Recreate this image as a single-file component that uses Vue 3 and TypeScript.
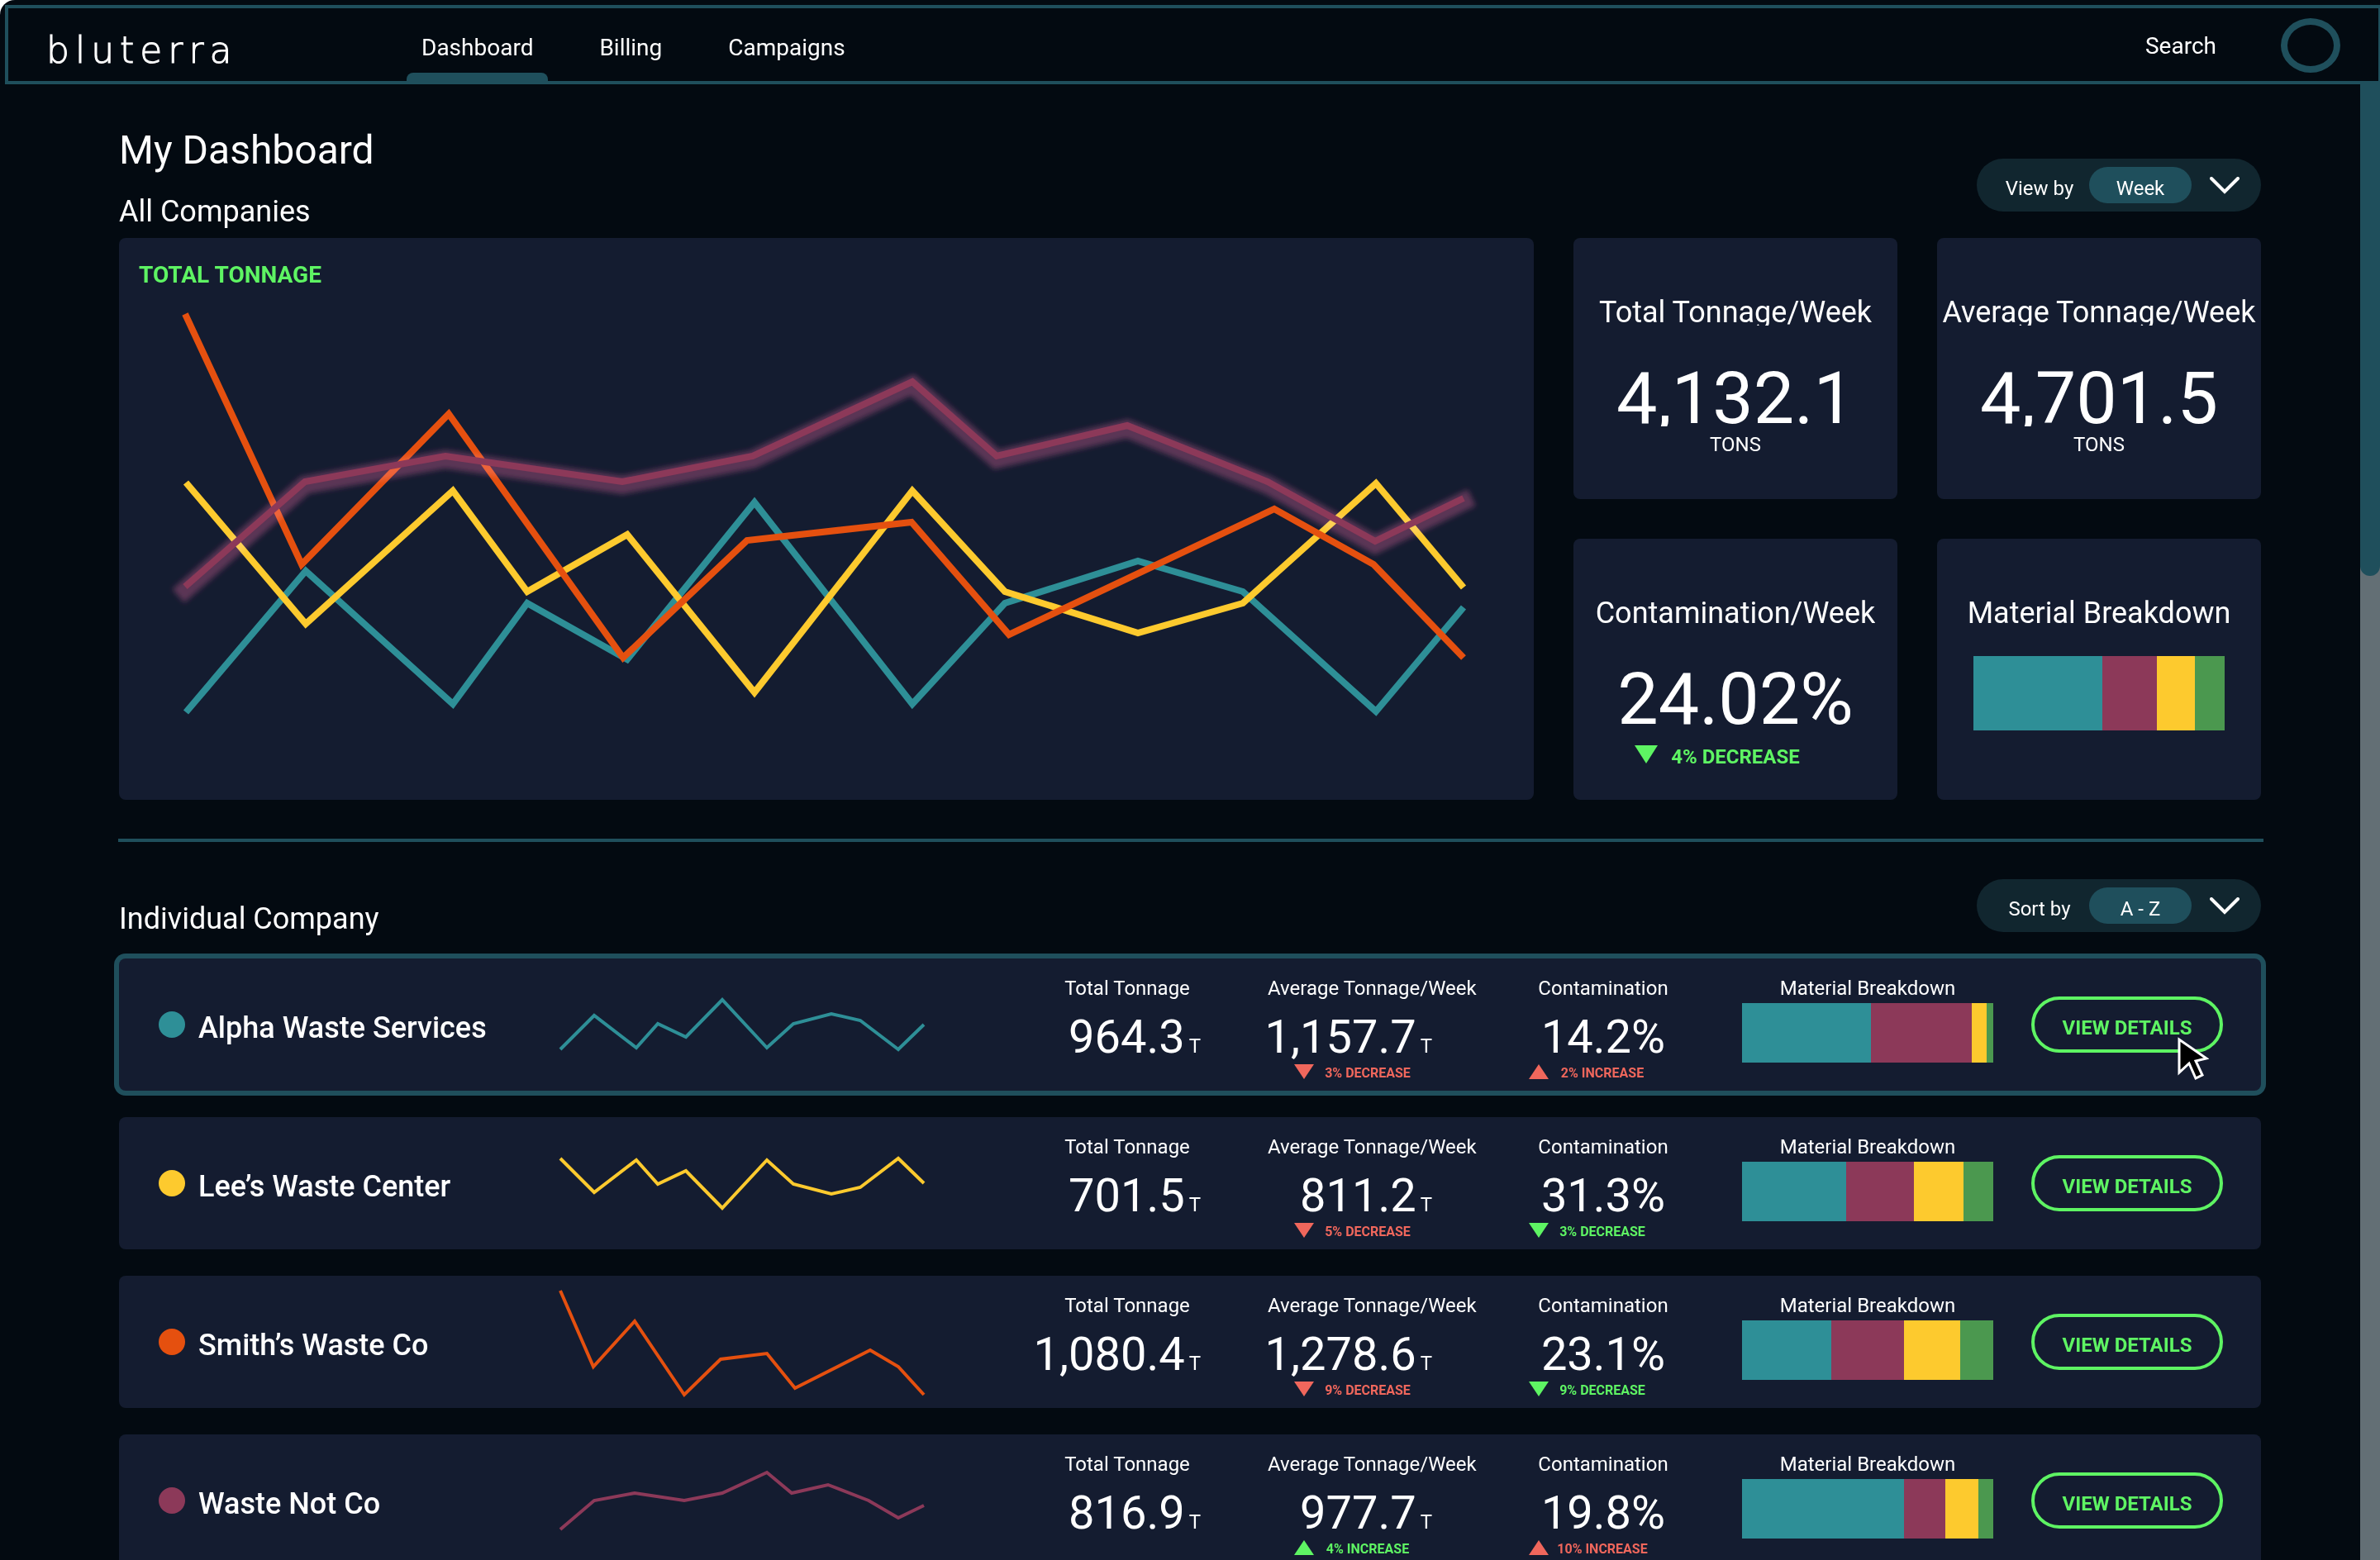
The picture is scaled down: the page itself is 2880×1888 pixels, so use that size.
<script setup lang="ts">
import { ref } from 'vue'

type Tone = 'good' | 'bad'

interface Trend {
  direction: 'up' | 'down'
  text: string
  tone: Tone
}

interface Company {
  name: string
  color: string
  spark: string
  total: string
  average: string
  averageTrend: Trend
  contamination: string
  contaminationTrend: Trend
  materials: number[]
}

const viewBy = ref('Week')
const sortBy = ref('A - Z')
const selected = ref('Alpha Waste Services')

const navItems = ['Dashboard', 'Billing', 'Campaigns']
const activeNav = ref('Dashboard')

const materialColors = ['#2e8f97', '#8c3959', '#fdca2e', '#4b984f']
const overallMaterials = [156, 66, 46, 36]

const chartLines = [
  {
    color: '#2e8f97',
    points: '81,574 226,403 404,564 494,442 615,510 769,320 960,564 1072,442 1233,391 1360,428 1521,573 1627,447',
  },
  {
    color: '#fdca2e',
    points: '81,296 226,467 404,306 494,428 615,359 769,550 960,306 1072,428 1233,478 1360,442 1521,297 1627,423',
  },
  {
    color: '#e5500f',
    points: '80,92 221,395 399,213 610,508 760,366 959,344 1077,480 1398,328 1518,395 1627,508',
  },
]
const highlighted =
  '80,422 225,295 395,264 609,295 767,264 960,174 1062,264 1220,227 1390,295 1520,367 1627,315'

const companies: Company[] = [
  {
    name: 'Alpha Waste Services',
    color: '#2e8f97',
    spark: '0,110 41,69 92,108 118,79 152,95 196,50 250,108 282,79 328,67 363,75 409,110 440,80',
    total: '964.3',
    average: '1,157.7',
    averageTrend: { direction: 'down', text: '3% DECREASE', tone: 'bad' },
    contamination: '14.2%',
    contaminationTrend: { direction: 'up', text: '2% INCREASE', tone: 'bad' },
    materials: [156, 122, 18, 8],
  },
  {
    name: 'Lee’s Waste Center',
    color: '#fdca2e',
    spark: '0,50 41,91 92,52 118,81 152,65 196,110 250,52 282,81 328,93 363,85 409,50 440,80',
    total: '701.5',
    average: '811.2',
    averageTrend: { direction: 'down', text: '5% DECREASE', tone: 'bad' },
    contamination: '31.3%',
    contaminationTrend: { direction: 'down', text: '3% DECREASE', tone: 'good' },
    materials: [126, 82, 60, 36],
  },
  {
    name: 'Smith’s Waste Co',
    color: '#e5500f',
    spark: '0,18 40,110 90,55 150,144 194,101 250,94 284,136 375,90 409,110 440,144',
    total: '1,080.4',
    average: '1,278.6',
    averageTrend: { direction: 'down', text: '9% DECREASE', tone: 'bad' },
    contamination: '23.1%',
    contaminationTrend: { direction: 'down', text: '9% DECREASE', tone: 'good' },
    materials: [108, 88, 68, 40],
  },
  {
    name: 'Waste Not Co',
    color: '#8c3959',
    spark: '0,115 41,80 90,71 150,80 196,71 250,46 280,71 324,61 373,80 409,101 440,86',
    total: '816.9',
    average: '977.7',
    averageTrend: { direction: 'up', text: '4% INCREASE', tone: 'good' },
    contamination: '19.8%',
    contaminationTrend: { direction: 'up', text: '10% INCREASE', tone: 'bad' },
    materials: [196, 50, 40, 18],
  },
]
</script>

<template>
  <div class="app">
    <header class="topbar">
      <a class="logo" href="#">bluterra</a>
      <nav class="nav">
        <a
          v-for="item in navItems"
          :key="item"
          href="#"
          class="nav-link"
          :class="{ active: item === activeNav }"
          @click.prevent="activeNav = item"
          >{{ item }}</a
        >
      </nav>
      <button type="button" class="search">Search</button>
      <button type="button" class="avatar" aria-label="Account"></button>
    </header>

    <div class="body">
      <main class="content">
        <div class="section-head">
          <div class="headings">
            <h1>My Dashboard</h1>
            <h2>All Companies</h2>
          </div>
          <div class="picker">
            <label for="view-by">View by</label>
            <select id="view-by" v-model="viewBy">
              <option>Week</option>
              <option>Month</option>
              <option>Year</option>
            </select>
            <svg class="chevron" viewBox="0 0 36 22" aria-hidden="true">
              <polyline points="2,2 18,18 34,2" />
            </svg>
          </div>
        </div>

        <section class="overview">
          <div class="card chart-card">
            <h3 class="chart-title">TOTAL TONNAGE</h3>
            <svg class="chart" viewBox="0 0 1712 680" role="img" aria-label="Total tonnage by company">
              <defs>
                <filter id="soft" x="-5%" y="-20%" width="110%" height="140%">
                  <feGaussianBlur stdDeviation="3" />
                </filter>
              </defs>
              <polyline
                v-for="line in chartLines"
                :key="line.color"
                :points="line.points"
                :stroke="line.color"
                class="line"
              />
              <g class="glow" transform="translate(0 4)">
                <polyline :points="highlighted" filter="url(#soft)" />
              </g>
              <polyline :points="highlighted" stroke="#8c3959" class="line" />
            </svg>
          </div>

          <div class="kpis">
            <article class="card kpi">
              <h3>Total Tonnage/Week</h3>
              <p class="figure">4,132.1</p>
              <p class="unit">TONS</p>
            </article>
            <article class="card kpi">
              <h3>Average Tonnage/Week</h3>
              <p class="figure">4,701.5</p>
              <p class="unit">TONS</p>
            </article>
            <article class="card kpi">
              <h3>Contamination/Week</h3>
              <p class="figure">24.02%</p>
              <p class="kpi-trend good">
                <svg viewBox="0 0 28 22" aria-hidden="true"><path d="M0 0H28L14 22Z" /></svg>
                <span>4% DECREASE</span>
              </p>
            </article>
            <article class="card kpi">
              <h3>Material Breakdown</h3>
              <div class="materials tall">
                <span
                  v-for="(share, i) in overallMaterials"
                  :key="i"
                  :style="{ flexGrow: share, background: materialColors[i] }"
                ></span>
              </div>
            </article>
          </div>
        </section>

        <hr class="divider" />

        <div class="section-head second">
          <h2>Individual Company</h2>
          <div class="picker">
            <label for="sort-by">Sort by</label>
            <select id="sort-by" v-model="sortBy">
              <option>A - Z</option>
              <option>Z - A</option>
            </select>
            <svg class="chevron" viewBox="0 0 36 22" aria-hidden="true">
              <polyline points="2,2 18,18 34,2" />
            </svg>
          </div>
        </div>

        <section class="companies">
          <article
            v-for="company in companies"
            :key="company.name"
            class="card row"
            :class="{ selected: company.name === selected }"
          >
            <div class="who">
              <span class="dot" :style="{ background: company.color }"></span>
              <h3>{{ company.name }}</h3>
            </div>
            <svg class="spark" viewBox="0 0 440 160" aria-hidden="true">
              <polyline :points="company.spark" :stroke="company.color" />
            </svg>
            <div class="stat total">
              <p class="label">Total Tonnage</p>
              <p class="value">{{ company.total }}<small>T</small></p>
            </div>
            <div class="stat average">
              <p class="label">Average Tonnage/Week</p>
              <p class="value">{{ company.average }}<small>T</small></p>
              <p class="trend" :class="company.averageTrend.tone">
                <svg viewBox="0 0 24 18" aria-hidden="true">
                  <path :d="company.averageTrend.direction === 'up' ? 'M0 18H24L12 0Z' : 'M0 0H24L12 18Z'" />
                </svg>
                <span>{{ company.averageTrend.text }}</span>
              </p>
            </div>
            <div class="stat contamination">
              <p class="label">Contamination</p>
              <p class="value">{{ company.contamination }}</p>
              <p class="trend" :class="company.contaminationTrend.tone">
                <svg viewBox="0 0 24 18" aria-hidden="true">
                  <path
                    :d="company.contaminationTrend.direction === 'up' ? 'M0 18H24L12 0Z' : 'M0 0H24L12 18Z'"
                  />
                </svg>
                <span>{{ company.contaminationTrend.text }}</span>
              </p>
            </div>
            <div class="stat breakdown">
              <p class="label">Material Breakdown</p>
              <div class="materials">
                <span
                  v-for="(share, i) in company.materials"
                  :key="i"
                  :style="{ flexGrow: share, background: materialColors[i] }"
                ></span>
              </div>
            </div>
            <div class="action">
              <button type="button" class="details" @click="selected = company.name">VIEW DETAILS</button>
              <svg v-if="company.name === selected" class="cursor" viewBox="0 0 38 54" aria-hidden="true">
                <path d="M2 4V44L14 33L22 51L30 47L22 30L35 27Z" />
              </svg>
            </div>
          </article>
        </section>
      </main>

      <div class="scrollbar" aria-hidden="true">
        <span class="thumb"></span>
        <span class="rest"></span>
      </div>
    </div>
  </div>
</template>

<style>
body {
  margin: 0;
  background: #ffffff;
}
</style>

<style scoped>
.app {
  display: flex;
  flex-direction: column;
  height: 100vh;
  box-sizing: border-box;
  padding-top: 6px;
  overflow: hidden;
  border-top-left-radius: 18px;
  background: #030a11;
  color: #ffffff;
  font-family: Roboto, "Liberation Sans", sans-serif;
}

h1,
h2,
h3,
p {
  margin: 0;
  font-weight: 400;
}

button,
select {
  font-family: inherit;
  color: inherit;
}

a {
  color: inherit;
  text-decoration: none;
}

/* Top bar */
.topbar {
  display: flex;
  flex: none;
  align-items: center;
  height: 88px;
  margin: 0 -2px 0 6px;
  padding: 0 46px;
  border: 4px solid #1f4f5c;
}

.logo {
  width: 436px;
  padding-top: 14px;
  font-family: "DejaVu Sans", sans-serif;
  font-size: 44px;
  font-weight: 200;
  line-height: 48px;
  letter-spacing: 7px;
  -webkit-text-stroke: 1px #ffffff;
}

.nav {
  display: flex;
  align-self: stretch;
  gap: 44px;
}

.nav-link {
  display: flex;
  flex-direction: column;
  padding: 32px 18px 0;
  font-size: 28px;
  line-height: 32px;
}

.nav-link.active::after {
  content: "";
  height: 10px;
  margin: auto -18px 0;
  border-radius: 8px 8px 0 0;
  background: #1f4f5c;
}

.search {
  margin-left: auto;
  padding: 4px 0 0;
  border: 0;
  background: none;
  font-size: 28px;
  line-height: 32px;
}

.avatar {
  box-sizing: border-box;
  width: 72px;
  height: 66px;
  margin: 2px 0 0 78px;
  padding: 0;
  border: 8px solid #1f4f5c;
  border-radius: 50%;
  background: none;
}

/* Page body */
.body {
  display: flex;
  flex: 1;
  min-height: 0;
}

.content {
  flex: 1;
  padding: 52px 120px 0 144px;
}

.section-head {
  display: flex;
  align-items: flex-end;
  justify-content: space-between;
}

.headings {
  display: grid;
  gap: 24px;
}

h1 {
  font-size: 48px;
  line-height: 56px;
}

h2 {
  padding-bottom: 10px;
  font-size: 36px;
  line-height: 44px;
}

.second h2 {
  padding-bottom: 26px;
}

.picker {
  display: flex;
  align-items: center;
  box-sizing: border-box;
  width: 344px;
  height: 64px;
  margin-bottom: 32px;
  padding-right: 26px;
  border-radius: 32px;
  background: #11262f;
  font-size: 24px;
}

.picker label {
  flex: 1;
  padding: 8px 0 0 16px;
  line-height: 28px;
  text-align: center;
}

.picker select {
  box-sizing: border-box;
  width: 124px;
  height: 44px;
  padding: 8px 0 0;
  border: 0;
  border-radius: 22px;
  appearance: none;
  background: #1f4f5c;
  font-size: 24px;
  text-align: center;
  text-align-last: center;
}

.chevron {
  width: 36px;
  height: 22px;
  margin: 2px 0 0 22px;
}

.chevron polyline {
  fill: none;
  stroke: #ffffff;
  stroke-width: 4;
  stroke-linecap: round;
}

.card {
  border-radius: 8px;
  background: #141c30;
}

/* Overview */
.overview {
  display: grid;
  grid-template-columns: 1fr 832px;
  gap: 48px;
}

.chart-card {
  position: relative;
}

.chart {
  display: block;
  width: 100%;
  height: auto;
}

.chart-title {
  position: absolute;
  top: 29px;
  left: 24px;
  color: #5ef463;
  font-size: 28px;
  font-weight: 700;
  line-height: 32px;
}

.line {
  fill: none;
  stroke-width: 8;
}

.glow {
  mix-blend-mode: screen;
}

.glow polyline {
  fill: none;
  stroke: #4e1a2d;
  stroke-width: 22;
  stroke-linecap: square;
}

.kpis {
  display: grid;
  grid-template-columns: 1fr 1fr;
  grid-template-rows: 1fr 1fr;
  gap: 48px;
}

.kpi {
  display: flex;
  flex-direction: column;
  align-items: center;
  padding-top: 74px;
}

.kpi h3 {
  height: 32px;
  overflow: hidden;
  font-size: 36px;
  line-height: 32px;
  white-space: nowrap;
}

.figure {
  height: 68px;
  margin-top: 54px;
  overflow: hidden;
  font-size: 88px;
  line-height: 68px;
}

.unit {
  margin-top: 8px;
  font-size: 24px;
  line-height: 28px;
}

.kpi-trend {
  display: grid;
  grid-template-columns: 28px auto 28px;
  gap: 16px;
  margin-top: 22px;
  font-size: 24px;
  font-weight: 700;
  line-height: 28px;
}

.kpi-trend svg {
  width: 28px;
  height: 22px;
  fill: currentColor;
}

.good {
  color: #5ef463;
}

.bad {
  color: #f0675c;
}

.materials {
  display: flex;
  width: 304px;
  height: 72px;
}

.materials span {
  flex: 0 0 0;
}

.materials.tall {
  height: 90px;
  margin-top: 36px;
}

.divider {
  height: 4px;
  margin: 47px -3px 45px -1px;
  border: 0;
  background: #1f4f5c;
}

/* Company rows */
.companies {
  display: grid;
  gap: 32px;
}

.row {
  display: grid;
  grid-template-columns: 486px 1fr 320px 272px 288px 352px 254px;
  height: 160px;
  padding: 0 46px 0 48px;
}

.row.selected {
  box-shadow: 0 0 0 6px #1f4f5c;
}

.who {
  display: flex;
  align-items: center;
  gap: 16px;
}

.who h3 {
  padding-top: 8px;
  font-size: 36px;
  font-weight: 500;
  line-height: 44px;
}

.dot {
  width: 32px;
  height: 32px;
  border-radius: 50%;
}

.spark {
  width: 440px;
  height: 160px;
  overflow: visible;
}

.spark polyline {
  fill: none;
  stroke-width: 4;
}

.stat {
  justify-self: center;
  padding-top: 22px;
}

.total {
  width: 178px;
}

.average {
  width: 252px;
}

.contamination {
  width: 180px;
}

.label {
  font-size: 24px;
  line-height: 28px;
  text-align: center;
  white-space: nowrap;
}

.value {
  display: flex;
  align-items: baseline;
  justify-content: flex-end;
  margin-top: 15px;
  font-size: 56px;
  line-height: 60px;
}

.average .value {
  padding-right: 53px;
}

.contamination .value {
  justify-content: center;
}

.value small {
  margin-left: 5px;
  font-size: 24px;
  line-height: 28px;
}

.trend {
  display: flex;
  margin-top: 3px;
  font-size: 16px;
  font-weight: 700;
  line-height: 22px;
}

.average .trend {
  margin-left: 32px;
}

.trend svg {
  width: 24px;
  height: 18px;
  fill: currentColor;
}

.trend span {
  width: 130px;
  text-align: center;
}

.breakdown .materials {
  margin-top: 4px;
}

.action {
  position: relative;
  align-self: center;
  justify-self: end;
}

.details {
  display: block;
  box-sizing: border-box;
  width: 232px;
  height: 68px;
  padding: 8px 0 0;
  border: 4px solid #5ef463;
  border-radius: 34px;
  background: none;
  color: #5ef463;
  font-size: 24px;
  font-weight: 700;
}

.cursor {
  position: absolute;
  top: 48px;
  right: 17px;
  width: 38px;
  height: 54px;
}

.cursor path {
  fill: #000000;
  stroke: #ffffff;
  stroke-width: 3;
}

/* Scrollbar */
.scrollbar {
  display: flex;
  flex-direction: column;
  width: 24px;
  background: #636f75;
}

.thumb {
  flex: 1;
  border-radius: 0 0 12px 12px;
  background: #1f4f5c;
}

.rest {
  flex: 2;
}
</style>
